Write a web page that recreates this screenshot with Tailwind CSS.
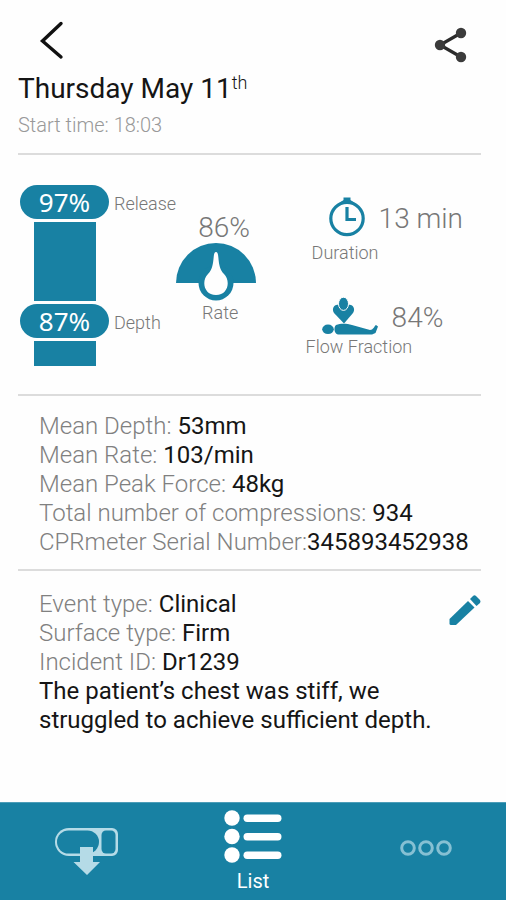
<!DOCTYPE html>
<html lang="en">
<head>
    <meta charset="UTF-8">
    <meta name="viewport" content="width=device-width, initial-scale=1.0">
    <title>Event details</title>
    <script src="https://cdn.jsdelivr.net/npm/@tailwindcss/browser@4"></script>
</head>
<body class="bg-[#fefefe] font-['Roboto',sans-serif] antialiased flex flex-col min-h-screen text-[#151515]">

    <!-- Header -->
    <header class="ml-[18px] mr-[25px] pt-5 pb-4 border-b-2 border-[#dcdcdc]">
        <div class="flex justify-between items-start pl-5 pr-3">
            <button type="button" aria-label="Back">
                <svg class="w-7 h-10" viewBox="0 0 28 40" fill="none" stroke="#111" stroke-width="3.4" stroke-linecap="round" stroke-linejoin="miter"><path d="M23 3.5 4.5 21 23 37"/></svg>
            </button>
            <button type="button" aria-label="Share" class="pt-[7px]">
                <svg class="w-9 h-9" viewBox="0 0 36 36"><path d="M28 6 7 18 28 30" fill="none" stroke="#2b2b2b" stroke-width="3.2"/><g fill="#3b3b3b"><circle cx="28" cy="6" r="5.2"/><circle cx="7" cy="18" r="5.2"/><circle cx="28" cy="30" r="5.2"/></g></svg>
            </button>
        </div>
        <h1 class="text-[28px] leading-8 mt-[10px]">Thursday May 11<sup class="text-[18px] font-light">th</sup></h1>
        <p class="text-[20px] leading-6 mt-2 font-light text-[#999]">Start time: 18:03</p>
    </header>

    <!-- Scores -->
    <section class="ml-[18px] mr-[25px] pt-[30px] pb-7 pl-[2px] flex border-b-2 border-[#dcdcdc] font-light text-[#777]">
        <div class="flex flex-col gap-[3px]">
            <div class="flex items-center gap-[5px]">
                <span class="w-[89px] h-[34px] rounded-full bg-[#1881a3] text-white text-[26px] leading-[34px] text-center font-['Noto_Sans',sans-serif] font-normal">97%</span>
                <span class="text-[18px] leading-6 pt-1">Release</span>
            </div>
            <div class="ml-[14px] w-[62px] h-[79px] bg-[#1881a3]"></div>
            <div class="flex items-center gap-[5px]">
                <span class="w-[89px] h-[34px] rounded-full bg-[#1881a3] text-white text-[26px] leading-[34px] text-center font-['Noto_Sans',sans-serif] font-normal">87%</span>
                <span class="text-[18px] leading-6 pt-1">Depth</span>
            </div>
            <div class="ml-[14px] w-[62px] h-[25px] bg-[#1881a3]"></div>
        </div>

        <div class="flex flex-col items-center pt-7 mr-auto">
            <span class="text-[28px] leading-[30px] pl-4">86%</span>
            <svg class="w-20 h-[58px]" viewBox="0 0 80 58">
                <path d="M0 40A40 40 0 0 1 80 40Z" fill="#1881a3"/>
                <circle cx="40" cy="40" r="17.5" fill="#1881a3"/>
                <path d="M40 9C41.500 9 42 11 42.300 14C43 22 44 27 48 31C55 38 52 52 40 52C28 52 25 38 32 31C36 27 37 22 37.700 14C38 11 38.500 9 40 9Z" fill="#fefefe"/>
            </svg>
            <span class="text-[18px] leading-6 pl-2">Rate</span>
        </div>

        <div class="flex flex-col pt-3 pr-[18px]">
            <div class="flex items-center gap-[13px] pl-[22px]">
                <svg class="w-[38px] h-10" viewBox="0 0 38 40" fill="none" stroke="#1881a3">
                    <circle cx="19" cy="21.5" r="16.2" stroke-width="3.2"/>
                    <path d="M15.500 0.500H22.500V3L26 5.500H12L15.500 3Z" fill="#1881a3" stroke="none"/>
                    <path d="M19 10V22.500H28" stroke-width="3.2"/>
                </svg>
                <span class="text-[28px] leading-8 pt-1">13 min</span>
            </div>
            <span class="text-[18px] leading-6 mt-1 pl-[6px]">Duration</span>
            <div class="flex items-center gap-[14px] mt-8 pl-4">
                <svg class="w-14 h-[38px]" viewBox="0 0 56 38" fill="#1881a3">
                    <path d="M14 8C17 7 26 7 29 8C32 9 33 13 31 16L22 26.500 12 16C10 13 11 9 14 8Z"/>
                    <ellipse cx="21.5" cy="6.8" rx="5" ry="6.6" stroke="#fefefe" stroke-width="1"/>
                    <ellipse cx="6" cy="32.3" rx="5.8" ry="4.800"/>
                    <path d="M14 28C19 26 25 26.500 30 28L48 33Q50 33 52 30.500Q53 28 54 28L56 29.500 53.500 36 50 37.500H16C12 37 11.500 30 14 28Z"/>
                </svg>
                <span class="text-[28px] leading-8 pt-1">84%</span>
            </div>
            <span class="text-[18px] leading-6">Flow Fraction</span>
        </div>
    </section>

    <!-- Measurements -->
    <section class="ml-[18px] mr-[25px] pt-4 pb-3 pl-[21px] border-b-2 border-[#dcdcdc] text-[24px] leading-[29px] whitespace-nowrap">
        <p><span class="font-light text-[#808080]">Mean Depth:</span> 53mm</p>
        <p><span class="font-light text-[#808080]">Mean Rate:</span> 103/min</p>
        <p><span class="font-light text-[#808080]">Mean Peak Force:</span> 48kg</p>
        <p><span class="font-light text-[#808080]">Total number of compressions:</span> 934</p>
        <p><span class="font-light text-[#808080]">CPRmeter Serial Number:</span>345893452938</p>
    </section>

    <!-- Event info -->
    <section class="ml-[18px] mr-[25px] pt-[19px] pb-6 pl-[21px] flex justify-between text-[24px] leading-[29px]">
        <div>
            <p><span class="font-light text-[#808080]">Event type:</span> Clinical</p>
            <p><span class="font-light text-[#808080]">Surface type:</span> Firm</p>
            <p><span class="font-light text-[#808080]">Incident ID:</span> Dr1239</p>
            <p>The patient’s chest was stiff, we struggled to achieve sufficient depth.</p>
        </div>
        <button type="button" aria-label="Edit" class="self-start shrink-0 pt-1">
            <svg class="w-8 h-8" viewBox="0 0 32 32" fill="#1881a3"><path d="M0.500 25 19 7 25.500 13.500 7 31H2Q0.500 31 0.500 29.500Z"/><path d="M21 5 24 2Q25.500 0.500 27 2L31 6Q32 7.500 31 9L27.500 12Z"/></svg>
        </button>
    </section>

    <!-- Bottom navigation -->
    <nav class="mt-auto h-[98px] px-[54px] bg-[#1881a3] border-t border-[#4c9db8] grid grid-cols-[1fr_auto_1fr]">
        <a href="#" aria-label="Download" class="justify-self-start pt-[23px]">
            <svg class="w-16 h-[50px]" viewBox="0 0 64 50">
                <path d="M15 2H58A6 6 0 0 1 64 8V24A6 6 0 0 1 58 30H15A14 14 0 0 1 15 2Z" fill="#b5dbe7"/>
                <rect x="3" y="4.500" width="42" height="23" rx="11.500" fill="#1881a3"/>
                <rect x="47.500" y="4.500" width="14" height="23" rx="4.500" fill="#1881a3"/>
                <path d="M26 21H39V36H46L33 49 19.500 36H26Z" fill="#b5dbe7"/>
            </svg>
        </a>
        <a href="#" class="flex flex-col items-center pt-[7px] text-white">
            <svg class="w-[58px] h-[53px]" viewBox="0 0 58 53" fill="white">
                <circle cx="8" cy="8" r="7.7"/><circle cx="8" cy="26.5" r="7.7"/><circle cx="8" cy="45" r="7.7"/>
                <rect x="19.500" y="4.500" width="38" height="7.500" rx="3.7"/><rect x="19.500" y="23" width="38" height="7.500" rx="3.7"/><rect x="19.500" y="41.500" width="38" height="7.500" rx="3.7"/>
            </svg>
            <span class="text-[20px] leading-6 mt-[6px]">List</span>
        </a>
        <a href="#" aria-label="More" class="justify-self-end pt-9">
            <svg class="w-[52px] h-[18px]" viewBox="0 0 52 18" fill="none" stroke="#86c0d3" stroke-width="3"><circle cx="8" cy="9" r="6.3"/><circle cx="26" cy="9" r="6.3"/><circle cx="44" cy="9" r="6.3"/></svg>
        </a>
    </nav>

</body>
</html>
